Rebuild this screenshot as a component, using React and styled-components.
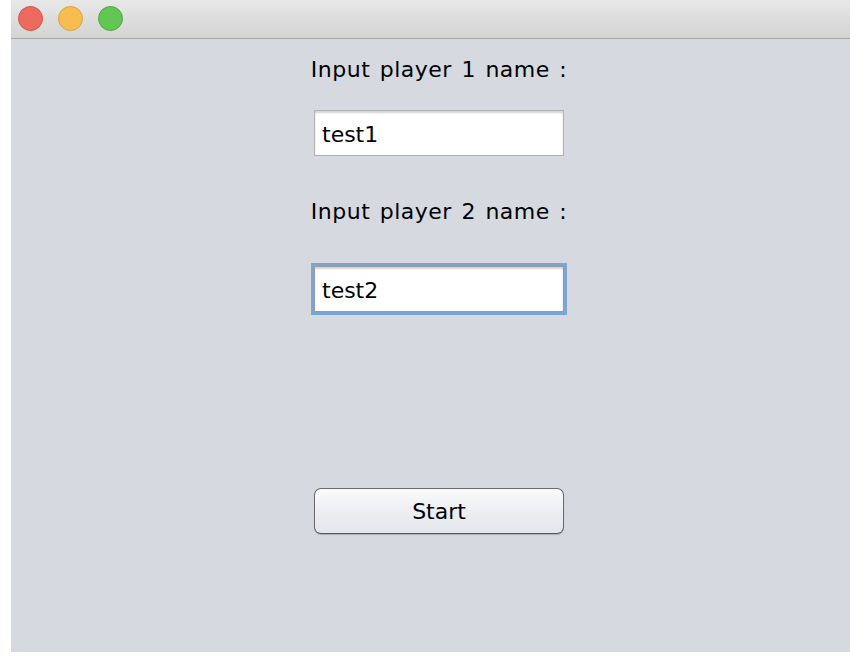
import React from "react";
import styled, { createGlobalStyle } from "styled-components";

const Global = createGlobalStyle`
  html, body { margin: 0; padding: 0; background: #ffffff; }
  body { font-family: "DejaVu Sans", "Liberation Sans", sans-serif; }
`;

const Page = styled.div`
  width: 850px;
  height: 666px;
  overflow: hidden;
  padding-left: 11px;
  box-sizing: border-box;
`;

const Window = styled.div`
  width: 839px;
  height: 652px;
  display: flex;
  flex-direction: column;
  background: #d7d9e0;
`;

const TitleBar = styled.div`
  height: 39px;
  flex: none;
  display: flex;
  align-items: center;
  gap: 15px;
  padding-left: 7px;
  padding-bottom: 2px;
  box-sizing: border-box;
  background: linear-gradient(#e8e8e8, #d3d3d3);
  border-bottom: 1px solid #a6a6a6;
  margin-bottom: 1px;
`;

const Light = styled.span`
  width: 23px;
  height: 23px;
  border-radius: 50%;
  background: ${(p) => p.$fill};
  border: 1px solid ${(p) => p.$edge};
`;

const Content = styled.div`
  flex: 1;
  display: flex;
  flex-direction: column;
  align-items: center;
  width: 270px;
  margin-left: 293px;
`;

const Label = styled.div`
  font-size: 22px;
  line-height: 30px;
  letter-spacing: 0.5px;
  word-spacing: 2px;
  color: #000;
  white-space: nowrap;
  margin-top: ${(p) => p.$top}px;
`;

const Field = styled.input`
  width: 250px;
  height: 46px;
  box-sizing: border-box;
  margin: ${(p) => p.$top}px 0 0;
  padding: 2px 7px 0;
  font-family: "DejaVu Sans", "Liberation Sans", sans-serif;
  font-size: 22px;
  color: #000;
  background: #fff;
  border: 1px solid ${(p) => (p.$focused ? "#9a9a9a" : "#b3b3b3")};
  box-shadow: inset 0 2px 2px rgba(0, 0, 0, 0.18)
    ${(p) => (p.$focused ? ", 0 0 0 3px #7ba6d4" : "")};
  outline: none;
`;

const Button = styled.button`
  width: 250px;
  height: 46px;
  margin-top: 176px;
  border-radius: 7px;
  border: 1px solid #6a6a6e;
  border-bottom-color: #55555a;
  background: linear-gradient(#fbfbfc 0%, #eeeff2 45%, #e3e6ee 100%);
  box-shadow: 0 1px 1px rgba(0, 0, 0, 0.2);
  font-family: "DejaVu Sans", "Liberation Sans", sans-serif;
  font-size: 22px;
  color: #000;
  padding: 0;
`;

export default function App() {
  return (
    <>
      <Global />
      <Page>
        <Window>
          <TitleBar>
            <Light $fill="#ee6a5f" $edge="#d35549" />
            <Light $fill="#f6be4f" $edge="#d9a240" />
            <Light $fill="#62c554" $edge="#4ea840" />
          </TitleBar>
          <Content>
            <Label $top={15}>Input player 1 name :</Label>
            <Field $top={25} defaultValue="test1" />
            <Label $top={41}>Input player 2 name :</Label>
            <Field $top={39} $focused defaultValue="test2" />
            <Button>Start</Button>
          </Content>
        </Window>
      </Page>
    </>
  );
}
